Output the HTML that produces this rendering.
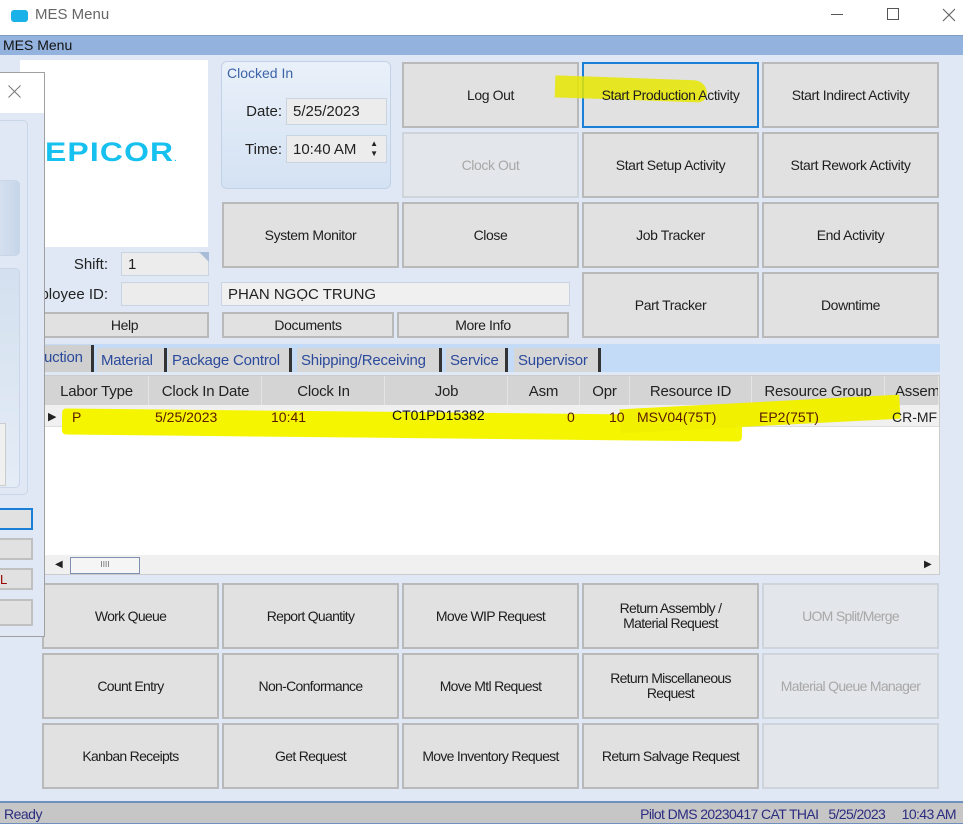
<!DOCTYPE html>
<html><head><meta charset="utf-8"><style>
*{box-sizing:border-box;margin:0;padding:0}
body{width:963px;height:831px;position:relative;overflow:hidden;background:#fff;font-family:"Liberation Sans",sans-serif;font-size:14px;color:#222}
.a{position:absolute}
.btn{position:absolute;background:#e1e1e1;border:2px solid #b9b9b9;display:flex;align-items:center;justify-content:center;text-align:center;font-size:14px;color:#1e1e1e;line-height:15px;letter-spacing:-0.4px}
.b2{letter-spacing:-0.7px}
.dis{color:#a8a8a8;background:#e3e6ea;border-color:#cfd4da}
.fld{position:absolute;background:#ececec;border:1px solid #c8d4e2;font-size:15px;padding-left:6px;display:flex;align-items:center}
.lbl{position:absolute;font-size:15px;text-align:right}
.tab{position:absolute;top:348px;height:24px;background:#d6d6d6;border-right:3px solid #333;color:#2b4a9c;font-size:15px;padding:4px 0 0 4px;letter-spacing:-0.2px}
.hd{position:absolute;top:376px;height:29px;font-size:15px;color:#222;padding-top:7px;border-right:1px solid #e4e4e4;text-align:center;letter-spacing:-0.2px}
.c{position:absolute;top:409px;font-size:14px;color:#5a1a00}
</style></head><body>
<!-- title bar -->
<div class="a" style="left:11px;top:10px;width:17px;height:12px;border:3px solid #1ab0e8;border-radius:3px;background:#fff"></div>
<div class="a" style="left:14px;top:13px;width:11px;height:6px;background:#1ab0e8"></div>
<div class="a" style="left:35px;top:6px;font-size:15px;color:#666">MES Menu</div>
<div class="a" style="left:831px;top:14px;width:12px;height:1px;background:#555"></div>
<div class="a" style="left:887px;top:8px;width:12px;height:12px;border:1px solid #555"></div>
<svg class="a" style="left:942px;top:8px" width="14" height="14"><path d="M1 1L13 13M13 1L1 13" stroke="#666" stroke-width="1.2"/></svg>
<!-- window -->
<div class="a" style="left:0;top:35px;width:963px;height:766px;background:#dfe8f4;border-top:1px solid #7f9cc4"></div>
<div class="a" style="left:0;top:36px;width:963px;height:19px;background:#93b3de;font-size:14px;padding:1px 0 0 3px;color:#111">MES Menu</div>
<!-- logo -->
<div class="a" style="left:20px;top:60px;width:188px;height:187px;background:#fff"></div>
<div class="a" style="left:45px;top:137px;font-size:27px;font-weight:bold;color:#16c0ef;letter-spacing:1px;transform:scaleX(1.18);transform-origin:left">EPICOR<span style="font-size:7px">.</span></div>
<div class="lbl" style="left:50px;top:256px;width:58px">Shift:</div>
<div class="fld" style="left:121px;top:252px;width:88px;height:24px">1</div>
<div class="a" style="left:199px;top:252px;width:0;height:0;border-left:10px solid transparent;border-top:10px solid #a9bdd8"></div>
<div class="lbl" style="left:20px;top:286px;width:88px">ployee ID:</div>
<div class="fld" style="left:121px;top:282px;width:88px;height:24px"></div>
<div class="btn" style="left:40px;top:312px;width:169px;height:26px">Help</div>
<!-- clocked in -->
<div class="a" style="left:221px;top:61px;width:170px;height:128px;border:1px solid #c2d2e6;border-radius:6px;background:linear-gradient(#e9f0f9,#d4e2f3)"></div>
<div class="a" style="left:227px;top:65px;font-size:14px;color:#3d64a8">Clocked In</div>
<div class="lbl" style="left:230px;top:103px;width:52px">Date:</div>
<div class="fld" style="left:286px;top:98px;width:101px;height:27px">5/25/2023</div>
<div class="lbl" style="left:230px;top:141px;width:52px">Time:</div>
<div class="fld" style="left:286px;top:135px;width:101px;height:28px">10:40 AM<span style="position:absolute;right:8px;top:3px;font-size:8px;line-height:10px">▲<br>▼</span></div>
<!-- top buttons -->
<div class="btn" style="left:402px;top:62px;width:177px;height:66px">Log Out</div>
<div class="btn" style="left:582px;top:62px;width:177px;height:66px;border-color:#1a7fd6;background:#e1e1e1"></div>
<div class="btn" style="left:762px;top:62px;width:177px;height:66px">Start Indirect Activity</div>
<div class="btn dis" style="left:402px;top:132px;width:177px;height:66px">Clock Out</div>
<div class="btn" style="left:582px;top:132px;width:177px;height:66px">Start Setup Activity</div>
<div class="btn" style="left:762px;top:132px;width:177px;height:66px">Start Rework Activity</div>
<div class="btn" style="left:222px;top:202px;width:177px;height:66px">System Monitor</div>
<div class="btn" style="left:402px;top:202px;width:177px;height:66px">Close</div>
<div class="btn" style="left:582px;top:202px;width:177px;height:66px">Job Tracker</div>
<div class="btn" style="left:762px;top:202px;width:177px;height:66px">End Activity</div>
<div class="btn" style="left:582px;top:272px;width:177px;height:66px">Part Tracker</div>
<div class="btn" style="left:762px;top:272px;width:177px;height:66px">Downtime</div>
<div class="fld" style="left:221px;top:282px;width:349px;height:24px;background:#f0f0f0">PHAN NGỌC TRUNG</div>
<div class="btn" style="left:222px;top:312px;width:172px;height:26px">Documents</div>
<div class="btn" style="left:397px;top:312px;width:172px;height:26px">More Info</div>
<!-- yellow highlight top -->
<div class="a" style="left:555px;top:78px;width:152px;height:22px;background:#e6e600;opacity:.85;border-radius:0 30px 20px 0;transform:rotate(2deg)"></div>
<div class="a" style="left:584px;top:87px;width:173px;text-align:center;font-size:14px;color:#1e1e1e;letter-spacing:-0.4px">Start Production Activity</div>
<!-- tabs -->
<div class="a" style="left:44px;top:344px;width:896px;height:28px;background:#c3dbf6"></div>
<div class="tab" style="left:44px;top:345px;width:50px;height:27px;background:#cfcfcf;color:#2b4a9c;padding-left:0">uction</div>
<div class="tab" style="left:97px;width:70px">Material</div>
<div class="tab" style="left:168px;width:124px">Package Control</div>
<div class="tab" style="left:297px;width:145px">Shipping/Receiving</div>
<div class="tab" style="left:446px;width:62px">Service</div>
<div class="tab" style="left:514px;width:87px">Supervisor</div>
<!-- grid -->
<div class="a" style="left:44px;top:375px;width:896px;height:200px;background:#fff;border:1px solid #ccc"></div>
<div class="a" style="left:45px;top:376px;width:894px;height:29px;background:#d4d4d4"></div>
<div class="hd" style="left:45px;width:104px">Labor Type</div>
<div class="hd" style="left:150px;width:112px">Clock In Date</div>
<div class="hd" style="left:263px;width:122px">Clock In</div>
<div class="hd" style="left:386px;width:122px">Job</div>
<div class="hd" style="left:508px;width:72px">Asm</div>
<div class="hd" style="left:580px;width:50px">Opr</div>
<div class="hd" style="left:630px;width:122px">Resource ID</div>
<div class="hd" style="left:752px;width:133px">Resource Group</div>
<div class="hd" style="left:885px;width:54px;text-align:left;padding-left:10px;overflow:hidden">Assem</div>
<div class="a" style="left:45px;top:405px;width:894px;height:22px;background:#f0f0f0;border-bottom:1px solid #ddd"></div>
<div class="a" style="left:62px;top:412px;width:680px;height:26px;background:#f5f500;transform:rotate(0.6deg);border-radius:4px"></div>
<div class="a" style="left:620px;top:402px;width:280px;height:24px;background:#f0f000;transform:rotate(-3deg)"></div>
<div class="a" style="left:48px;top:410px;font-size:11px">▶</div>
<div class="c" style="left:72px">P</div>
<div class="c" style="left:155px">5/25/2023</div>
<div class="c" style="left:271px">10:41</div>
<div class="c" style="left:392px;top:407px;color:#111">CT01PD15382</div>
<div class="c" style="left:567px">0</div>
<div class="c" style="left:609px">10</div>
<div class="c" style="left:637px">MSV04(75T)</div>
<div class="c" style="left:759px">EP2(75T)</div>
<div class="c" style="left:892px;color:#222">CR-MF</div>
<div class="a" style="left:45px;top:555px;width:894px;height:19px;background:#f0f0f0"></div>
<div class="a" style="left:55px;top:559px;font-size:10px">◀</div>
<div class="a" style="left:70px;top:557px;width:70px;height:17px;border:1px solid #8090b0;background:#f5f5f5;font-size:8px;text-align:center;color:#666;line-height:14px">IIII</div>
<div class="a" style="left:924px;top:559px;font-size:10px">▶</div>
<!-- bottom buttons -->
<div class="btn b2" style="left:42px;top:583px;width:177px;height:66px">Work Queue</div>
<div class="btn b2" style="left:222px;top:583px;width:177px;height:66px">Report Quantity</div>
<div class="btn b2" style="left:402px;top:583px;width:177px;height:66px">Move WIP Request</div>
<div class="btn b2" style="left:582px;top:583px;width:177px;height:66px">Return Assembly /<br>Material Request</div>
<div class="btn dis b2" style="left:762px;top:583px;width:177px;height:66px">UOM Split/Merge</div>
<div class="btn b2" style="left:42px;top:653px;width:177px;height:66px">Count Entry</div>
<div class="btn b2" style="left:222px;top:653px;width:177px;height:66px">Non-Conformance</div>
<div class="btn b2" style="left:402px;top:653px;width:177px;height:66px">Move Mtl Request</div>
<div class="btn b2" style="left:582px;top:653px;width:177px;height:66px">Return Miscellaneous<br>Request</div>
<div class="btn dis b2" style="left:762px;top:653px;width:177px;height:66px">Material Queue Manager</div>
<div class="btn b2" style="left:42px;top:723px;width:177px;height:66px">Kanban Receipts</div>
<div class="btn b2" style="left:222px;top:723px;width:177px;height:66px">Get Request</div>
<div class="btn b2" style="left:402px;top:723px;width:177px;height:66px">Move Inventory Request</div>
<div class="btn b2" style="left:582px;top:723px;width:177px;height:66px">Return Salvage Request</div>
<div class="btn dis" style="left:762px;top:723px;width:177px;height:66px"></div>
<!-- left overlay panel -->
<div class="a" style="left:0;top:72px;width:45px;height:565px;background:#dfe8f4;border:1px solid #a0a0a0;border-left:none"></div>
<div class="a" style="left:0;top:73px;width:44px;height:40px;background:#fff"></div>
<svg class="a" style="left:8px;top:85px" width="13" height="13"><path d="M0.5 0.5L12.5 12.5M12.5 0.5L0.5 12.5" stroke="#777" stroke-width="1"/></svg>
<div class="a" style="left:0;top:120px;width:28px;height:375px;border:1px solid #c8d6e8;border-left:none;border-radius:0 5px 5px 0"></div>
<div class="a" style="left:0;top:180px;width:20px;height:76px;border:1px solid #c8d6e8;border-left:none;border-radius:0 5px 5px 0;background:linear-gradient(90deg,#d4e0ef,#c6d6ea)"></div>
<div class="a" style="left:0;top:268px;width:20px;height:220px;border:1px solid #c8d6e8;border-left:none;border-radius:0 5px 5px 0;background:linear-gradient(#d4e0ef,#e4ecf6)"></div>
<div class="a" style="left:0;top:423px;width:6px;height:63px;background:#f0f0f0;border:1px solid #ccc;border-left:none"></div>
<div class="a" style="left:0;top:508px;width:33px;height:22px;border:2px solid #1a7fd6;border-left:none;background:#e1e1e1"></div>
<div class="a" style="left:0;top:538px;width:33px;height:22px;border:2px solid #c0c0c0;border-left:none;background:#e1e1e1"></div>
<div class="a" style="left:0;top:568px;width:33px;height:22px;border:2px solid #c0c0c0;border-left:none;background:#e1e1e1;font-size:13px;color:#900;padding-top:2px">L</div>
<div class="a" style="left:0;top:599px;width:33px;height:27px;border:2px solid #c0c0c0;border-left:none;background:#e1e1e1"></div>
<!-- status bar -->
<div class="a" style="left:0;top:801px;width:963px;height:23px;background:#c6c6c6;border-top:2px solid #6f8fbf;border-bottom:1px solid #6f8fbf;font-size:14px;color:#2c2c80;padding:3px 0 0 4px;letter-spacing:-0.5px">Ready<span style="position:absolute;right:7px;top:3px;letter-spacing:-0.6px">Pilot DMS 20230417 CAT THAI&nbsp;&nbsp; 5/25/2023 &nbsp;&nbsp;&nbsp; 10:43 AM</span></div>
<div class="a" style="left:0;top:824px;width:963px;height:7px;background:#fff"></div>
</body></html>
